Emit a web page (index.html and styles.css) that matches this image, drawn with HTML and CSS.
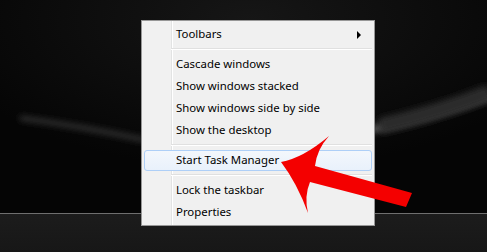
FILE: index.html
```html
<!DOCTYPE html>
<html>
<head>
    <title>Taskbar menu</title>
    <link rel="stylesheet" href="styles.css">
</head>
<body>
    <div class="screen">
        <div class="desktop">
            <!-- brilhos do papel de parede -->
            <svg class="streaks" width="487" height="213" viewBox="0 0 487 213">
                <defs>
                    <filter id="soft" x="-20%" y="-200%" width="140%" height="500%">
                        <feGaussianBlur stdDeviation="3"/>
                    </filter>
                </defs>
                <path d="M20,118 Q80,126 145,140" stroke="#3a3a3a" stroke-width="4" fill="none" filter="url(#soft)"/>
                <path d="M370,130 Q430,118 490,96" stroke="#5a5a5a" stroke-width="7" fill="none" filter="url(#soft)"/>
                <path d="M380,126 Q440,112 490,92" stroke="#2a2a2a" stroke-width="16" fill="none" filter="url(#soft)"/>
            </svg>
        </div>
        <div class="taskbar"></div>

        <!-- menu do taskbar -->
        <div class="menu">
            <div class="item has-sub">Toolbars<span class="sub-arrow"></span></div>
            <div class="sep"></div>
            <div class="item">Cascade windows</div>
            <div class="item">Show windows stacked</div>
            <div class="item">Show windows side by side</div>
            <div class="item">Show the desktop</div>
            <div class="sep"></div>
            <div class="item hover">Start Task Manager</div>
            <div class="sep"></div>
            <div class="item">Lock the taskbar</div>
            <div class="item">Properties</div>
        </div>

        <svg class="arrow" width="487" height="252" viewBox="0 0 487 252">
            <path d="M281,162 Q303,158 329,136 Q317,149 315,166 L412,193 L406,207 L310,182 Q304,196 308,213 Q297,183 281,162 Z" fill="#f40000"/>
        </svg>
    </div>
</body>
</html>
```

FILE: styles.css
```css
body {
    margin: 0;
    padding: 0;
    background: #000;
    overflow: hidden;
}

.screen {
    position: relative;
    width: 487px;
    height: 252px;
    display: flex;
    flex-direction: column;
}

.desktop {
    height: 213px;
    background:
        radial-gradient(ellipse 320px 150px at 250px 20px, #161616, transparent),
        #050505;
}

.streaks {
    display: block;
}

.taskbar {
    flex: 1;
    border-top: 1px solid #6f6f6f;
    background:
        radial-gradient(ellipse 80px 30px at 225px 252px, #383838, transparent),
        linear-gradient(#1c1c1c, #171717);
}

.menu {
    position: absolute;
    left: 141px;
    top: 20px;
    width: 228px;
    padding: 2px;
    border: 1px solid #979797;
    background: linear-gradient(to right, #f1f1f1 29px, #e2e3e3 29px, #e2e3e3 30px, #ffffff 30px, #ffffff 31px, #f0f0f0 31px);
    font-family: "Segoe UI", "Noto Sans", sans-serif;
    font-size: 11.4px;
    color: #000;
}

.item {
    position: relative;
    height: 22px;
    line-height: 22px;
    padding-left: 32px;
}

.item.hover::before {
    content: "";
    position: absolute;
    left: 0;
    right: 0;
    top: 1px;
    bottom: 0;
    border: 1px solid #aecff7;
    border-radius: 3px;
    background: linear-gradient(#f3f7fc, #e9f1fb);
    z-index: -1;
}

.item.hover {
    z-index: 0;
}

.sub-arrow {
    position: absolute;
    right: 11px;
    top: 8px;
    border-left: 4px solid #000;
    border-top: 4px solid transparent;
    border-bottom: 4px solid transparent;
}

.sep {
    height: 8px;
    margin-left: 27px;
    position: relative;
}

.sep::after {
    content: "";
    position: absolute;
    left: 0;
    right: 0;
    top: 3px;
    height: 1px;
    border-bottom: 1px solid #fff;
    background: #e0e0e0;
}

.arrow {
    position: absolute;
    left: 0;
    top: 0;
}
```
